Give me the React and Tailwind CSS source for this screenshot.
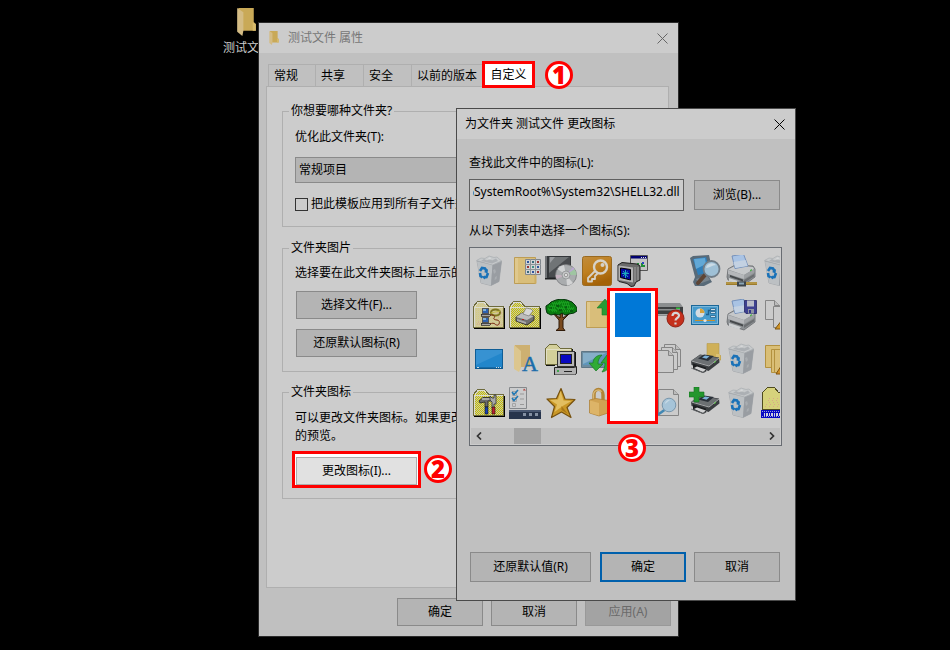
import React, { useEffect, useRef, useState } from "react";

const tabs = [
  { label: "常规", width: "w-[47px]" },
  { label: "共享", width: "w-[48px]" },
  { label: "安全", width: "w-[48px]" },
  { label: "以前的版本", width: "w-[71px]" },
];

function Svg({ children }) {
  return (
    <svg viewBox="0 0 32 32" className="w-8 h-8 shrink-0" aria-hidden="true">
      {children}
    </svg>
  );
}

/* ---------- shared icon pieces ---------- */

function YellowFolder({ x = 5 }) {
  return (
    <g transform={`translate(${x} 0)`}>
      <path d="M.5 2.500h21v26H.5z" fill="#d9be7a" stroke="#bd9d55" strokeWidth="1" />
      <path d="M1 3h3v25H1z" fill="#dfc88d" />
      <path d="M20.500 14l2 3v11.500h-2z" fill="#cdae63" />
    </g>
  );
}

function ClassicFolder({ dense }) {
  const id = dense ? "dither-dense" : "dither-light";
  return (
    <g shapeRendering="crispEdges">
      <defs>
        <pattern id={id} width="2" height="2" patternUnits="userSpaceOnUse">
          <rect width="2" height="2" fill={dense ? "#c9c9a8" : "#d3cf95"} />
          <rect width="1" height="1" fill={dense ? "#c6be00" : "#cfc6a0"} />
          <rect x="1" y="1" width="1" height="1" fill={dense ? "#c6be00" : "#d2c58c"} />
        </pattern>
      </defs>
      <path d="M1 29.500h31M31.500 9v21" stroke="#000" fill="none" />
      <path d="M.5 28.500V7.500l4-5h7l4 4.500h15v21.500z" fill={`url(#${id})`} stroke="#6e6b3c" />
      <path d="M1.500 28V8.500H30M2 7.500L5 3.500h6l3.500 4" fill="none" stroke="#dcdcd0" />
    </g>
  );
}

function PrinterBase() {
  return (
    <g>
      <path d="M3 15l7-4 18 1 2 3v8l-11 8-16-5-1-3z" fill="#8c9093" stroke="#686b6e" strokeWidth=".8" />
      <path d="M3 15.500l8-4 17 1.500 1 2-10 6z" fill="#c6c8ca" />
      <path d="M3 16l16 5v4L3 20z" fill="#b5b7ba" />
      <path d="M19 21l10.500-6v3.500L19 25z" fill="#9da0a3" />
      <path d="M5 21l13 4.500v2L5 23z" fill="#46494c" />
      <path d="M19 26l10-6v2.500L19 29z" fill="#6c6f72" />
      <path d="M4 24l12 4-2 2.500-10-3.500z" fill="#cdd0d2" />
      <path d="M7 2l11.500-2 4.500 12-13 2.500z" fill="#a9c3e4" stroke="#6484b4" strokeWidth=".8" />
      <path d="M8.500 8l12-2 2.200 6-12.500 2z" fill="#c3d1e2" />
      <path d="M25 16l2-1v1.500l-2 1z" fill="#4fb04b" />
    </g>
  );
}

function DarkPrinter() {
  return (
    <g>
      <path d="M2 18l9-6.500 19 3 .500 5-11 8.500L2.500 22z" fill="#3a3d40" />
      <path d="M2.500 17.500L11 12l18.500 3-9.500 7.500z" fill="#6c7073" />
      <path d="M9 15.500l6-4 10 1.500-6 5z" fill="#2a3038" />
      <path d="M13 14.500l3-2 4.500.8-3 2.400z" fill="#7fb2d9" />
      <path d="M2.500 18l17.500 5 10-8" fill="none" stroke="#b4b6b8" strokeWidth=".9" />
      <path d="M4 20.500l13 4v4l-3 1.500L4 26z" fill="#1d1f21" />
      <path d="M5 25l3-1.500 9 3-3 2.500z" fill="#d2d3d4" />
      <path d="M2 25l12 4.500 4-2" fill="none" stroke="#707376" strokeWidth=".8" />
      <path d="M25 19l2-1.500v1.200L25 20.300z" fill="#5ec04c" />
    </g>
  );
}

function BlankPage({ x, y, w = 18, h = 22 }) {
  return (
    <g transform={`translate(${x} ${y})`} fill="#cbcbcb" stroke="#858585" strokeWidth="1">
      <path d={`M0 0H${w - 5}L${w} 5V${h}H0z`} />
      <path d={`M${w - 5} 0V5H${w}`} fill="#bcbcbc" />
    </g>
  );
}

/* ---------- icons of the list ---------- */

function RecycleBin() {
  return (
    <Svg>
      <path d="M4 6l4 22 10 2.500 8-4L28.500 6 19 9z" fill="#a9adb1" stroke="#94999e" strokeWidth=".6" />
      <path d="M4 6.500l4 21.500 10 2.500L19.500 10z" fill="#bcc0c3" />
      <path d="M19.500 10L18 30.500l8-4L28.500 7z" fill="#999da2" />
      <path d="M3.500 5.500L8 3l4 .5 4-2.500 5 1.500 3-.5 4.500 4-9 4z" fill="#c6c9cb" stroke="#a3a7ab" strokeWidth=".6" />
      <path d="M8 6l3-2 3 1.500L17 3l2 2.500 4-2 2 2.500-6 2.500z" fill="#acb0b4" />
      <path d="M14 4.500L17 2l1.500 2.500z" fill="#d5d7d8" />
      <path d="M20 15l2-1 1 3-2 2zM22 22l2-1-.5 3-2 1z" fill="#a9adb1" />
      <g fill="none" stroke="#1a72b8" strokeWidth="2.600">
        <path d="M7 16l2-3 3 .5 1.500 2.500" />
        <path d="M15 18l-1.500 4-3 .5" />
        <path d="M9.500 22.500L7.500 21l-.5-3" />
      </g>
      <path d="M15 14l-.5 4.500L11 17zM12 20.500v4l-3-2.500z" fill="#1a72b8" />
    </Svg>
  );
}

function ProgramsFolder() {
  return (
    <Svg>
      <YellowFolder x={5} />
      <path d="M16.500 4.500h15v15h-15z" fill="#d2d4d6" stroke="#80868c" />
      <path d="M16 9.500h16M16 14.500h16M21.500 4v16M26.500 4v16" stroke="#8e9398" />
      <path d="M18 6h2v2h-2zM28 11h2v2h-2zM23 16h2v2h-2z" fill="#31559c" />
      <path d="M23 6h2v2h-2zM18 16h2v2h-2z" fill="#3b6a7a" />
      <path d="M28 6h2v2h-2zM18 11h2v2h-2zM28 16h2v2h-2z" fill="#9c3331" />
      <path d="M23 11h2v2h-2z" fill="#3d8f85" />
    </Svg>
  );
}

function DiscCase() {
  return (
    <Svg>
      <path d="M0 1h26v22H0z" fill="#34373a" />
      <path d="M0 1h2v22H0z" fill="#707376" />
      <path d="M4 2h21v20H4z" fill="#484b4e" />
      <path d="M4 2h20L4 18z" fill="#707476" />
      <path d="M5 2h5L5 8z" fill="#9a9da0" />
      <path d="M0 23h26v1.500H0z" fill="#1e2022" />
      <circle cx="21" cy="20" r="10.500" fill="#a9acae" stroke="#77797b" strokeWidth=".8" />
      <path d="M21 20L12.500 14A10.500 10.500 0 0 1 19 10z" fill="#cfd1d2" />
      <path d="M21 20l7 8a10 10 0 0 1-6 2.500z" fill="#d3d4d5" />
      <path d="M21 20l8.500-6a10 10 0 0 1 2 6z" fill="#9fc5a2" />
      <path d="M21 20l7-8a10 10 0 0 1 1.500 2z" fill="#b9a8d0" />
      <path d="M21 20l-9.500 4a10 10 0 0 1-.800-4z" fill="#c4b2bf" />
      <circle cx="21" cy="20" r="4" fill="#c5c7c8" stroke="#8d9092" strokeWidth=".8" />
      <circle cx="21" cy="20" r="1.700" fill="#ddd" stroke="#777" strokeWidth=".6" />
    </Svg>
  );
}

function KeyTile() {
  return (
    <Svg>
      <defs>
        <linearGradient id="key-tile" x1="0" y1="0" x2=".4" y2="1">
          <stop offset="0" stopColor="#c18c3c" />
          <stop offset=".5" stopColor="#bf8020" />
          <stop offset="1" stopColor="#a46208" />
        </linearGradient>
      </defs>
      <rect x="1.500" y="1.500" width="29" height="29" rx="2" fill="url(#key-tile)" stroke="#9a6a20" />
      <g fill="none" stroke="#d6d2c8" strokeWidth="2.400" strokeLinejoin="round">
        <circle cx="19.500" cy="12" r="6.500" />
        <path d="M14.500 15.500L7 23v3.500h4V24h3v-3l3.500-3.500" strokeWidth="1.800" />
      </g>
      <circle cx="21.500" cy="10" r="2" fill="#d6d2c8" />
    </Svg>
  );
}

function ScreenWindow() {
  return (
    <Svg>
      <path d="M13.500.500h17v15h-17z" fill="#c4c4c4" stroke="#555" />
      <path d="M14 1h16v2.500H14z" fill="#000070" />
      <path d="M24 2h1v1h-1zM26 2h1v1h-1zM28 2h1v1h-1z" fill="#ddd" />
      <path d="M18 12v-2h2V8h2v4zM24 12V8h2v2h2v2z" fill="#218e38" />
      <path d="M19 10h2v2h-2z" fill="#be2726" />
      <path d="M25 7h2v2h-2z" fill="#2b43c4" />
      <path d="M1 10l4-2.500L20 9l3 2v14l-4 2-2 4-3 .5-4-3-8-2-1-1z" fill="#6b6b6b" stroke="#222" />
      <path d="M1.500 10.500L16 12.500v15L1.500 25z" fill="#b4b4b4" />
      <path d="M3.500 13l10 1.500V25L3.500 22.500z" fill="#06069c" stroke="#000" />
      <path d="M6 16l5 6M11 16.500L6 21M5 18.500h7M8.500 15v8" stroke="#1aa9bd" strokeWidth="1" />
      <path d="M18 12v15M21 12v13" stroke="#a0a0a0" />
    </Svg>
  );
}

function ScreenMagnifier() {
  return (
    <Svg>
      <defs>
        <filter id="soft"><feGaussianBlur stdDeviation=".7" /></filter>
      </defs>
      <g filter="url(#soft)">
        <path d="M1 3l3-2 16-1 4 18-4 4 3 5-8 4H6l-2-4 2-5z" fill="#586a78" />
        <path d="M4 4l13-2 4 15-12 3z" fill="#2f7fbb" />
        <path d="M5 4l11-1 1 6-10 5z" fill="#62a8d6" />
        <path d="M7 24l11-3 3 4-11 4z" fill="#78848d" />
        <path d="M16 20l-7 8" stroke="#5d4434" strokeWidth="4" strokeLinecap="round" />
        <circle cx="22.500" cy="14" r="8" fill="#9fc0d6" stroke="#707d88" strokeWidth="1.800" />
        <path d="M17 13a6 6 0 0 1 10-3c-4 0-6 3-10 3z" fill="#cbdbe6" />
      </g>
    </Svg>
  );
}

function NetworkPrinter() {
  return (
    <Svg>
      <g transform="translate(0 -1)"><PrinterBase /></g>
      <path d="M1 28.500h31" stroke="#9c7c2d" strokeWidth="3" />
      <path d="M1 28h31" stroke="#c9ac5c" strokeWidth="1" />
      <path d="M12 26.500h9v5h-9z" fill="#3c444b" />
      <path d="M14 27.500h5v2h-5z" fill="#8aa6b8" />
    </Svg>
  );
}

function NetworkFolder() {
  return (
    <Svg>
      <ClassicFolder />
      <path d="M4 25h10M5 23h5M24 14h5M25 18h4M22 26h7" stroke="#d2a08c" strokeDasharray="1 1" />
      <g shapeRendering="crispEdges">
        <path d="M9.500 9.500h6v5h-6zM9.500 18.500h6v5h-6z" fill="#2d62b0" stroke="#555" />
        <path d="M8 15h9v2H8zM8 24h9v2H8z" fill="#a5a5a5" stroke="#222" strokeWidth=".7" />
        <path d="M10 10h3v2h-3zM10 19h3v2h-3z" fill="#7fb2d9" />
      </g>
      <ellipse cx="22.500" cy="13.500" rx="4.500" ry="3" fill="none" stroke="#7d7520" strokeWidth="2" />
      <path d="M18 14l9-2" stroke="#c6be4e" />
      <path d="M17 16h2c3 0 3 2 2 3s1 2 3 2 3 2 2 4-3 1-4 0-3-1-5 0" fill="none" stroke="#7a2a12" strokeWidth="1" />
    </Svg>
  );
}

function PrinterFolder() {
  return (
    <Svg>
      <ClassicFolder dense />
      <path d="M7 18l6-4 12 3v4l-7 5-11-4z" fill="#707070" stroke="#333" />
      <path d="M7 18l6-4 12 3-7 4z" fill="#bcbcbc" />
      <path d="M14 15l3-6 5 1 2 2-4 5z" fill="#d6d6d6" stroke="#777" strokeWidth=".7" />
      <path d="M8 20l9 3v2l-9-3z" fill="#aaa" />
      <path d="M13 20h2v1h-2z" fill="#b51e1e" />
    </Svg>
  );
}

function Tree() {
  return (
    <Svg>
      <path d="M7 13l7 8v8l-3 2.500h9L18 29v-8l8-8-8 6-1-6h-2v6z" fill="#7a4a1e" stroke="#2f1a09" />
      <path d="M1 10V7l3-2 2-2 5-2 5-1 6 1 5 2 3 3 2 3v3l-3 2-5 1-4 1-3-2-3 2-4-1-4 1-4-2z" fill="#0a7c10" stroke="#04320b" />
      <g stroke="#25bd2c" strokeDasharray="1 1">
        <path d="M4 7h8M7 4h7M14 3h9M17 6h8M3 10h7M12 9h7M22 9h7M7 12h6M18 12h7" strokeWidth="1" />
        <path d="M5 8h8M8 5h7M15 4h9M18 7h8M4 11h7M13 10h7M23 10h6" />
      </g>
      <path d="M11 7h3M14 11h3M20 8h2M25 12h3M5 9h2" stroke="#033f0a" />
    </Svg>
  );
}

function FolderUp() {
  return (
    <Svg>
      <YellowFolder x={5} />
      <path d="M24 0l8 9h-5v7h-6V9h-5z" fill="#2a9b36" stroke="#1d7a28" strokeWidth=".6" />
    </Svg>
  );
}

function UnknownDrive() {
  return (
    <Svg>
      <path d="M1 8l3-4h23l3 4v8l-3 1H1z" fill="#8b8e8f" />
      <path d="M1 8h29v7H1z" fill="#3d4041" />
      <path d="M2 10h25v1.500H2z" fill="#8a8d8e" />
      <path d="M1 15.500h29" stroke="#a5a7a7" />
      <path d="M23 8.500h4V10h-4z" fill="#2ebc3a" />
      <circle cx="22.500" cy="19.500" r="8.500" fill="#c5301c" stroke="#8e2115" />
      <path d="M19.500 17c0-4 6.500-4 6.500-.5 0 2.500-3.500 2.500-3.500 5M22.500 23.500v2" fill="none" stroke="#d6d6d6" strokeWidth="2.200" />
    </Svg>
  );
}

function ControlPanel() {
  return (
    <Svg>
      <rect x="2.500" y="6.500" width="27" height="19" fill="#469bcd" stroke="#1b6798" />
      <path d="M3.500 7.500h25v17h-25z" fill="none" stroke="#7cb7da" />
      <circle cx="11" cy="14" r="4.500" fill="#d5dbe0" />
      <path d="M11 14V9.500a4.500 4.500 0 0 1 4.500 4.500z" fill="#d6a13a" />
      <path d="M17 15.500h2.500v-4H22" fill="none" stroke="#1f5f8c" strokeWidth="1.400" />
      <path d="M21.500 9.500h5v2h-5zM21.500 12.500h5v2h-5zM21.500 16.500h5v2h-5z" fill="#cfdde8" stroke="#20648f" strokeWidth=".8" />
      <path d="M6 21.500h20" stroke="#c98f2a" strokeWidth="1" />
      <circle cx="16" cy="21.500" r="1.600" fill="#e4e4e4" />
    </Svg>
  );
}

function SavePrinter() {
  return (
    <Svg>
      <PrinterBase />
      <path d="M19.500 1.500h12v13H21l-1.500-1.500z" fill="#3d4090" stroke="#252765" strokeWidth=".8" />
      <path d="M22 1.500h7v6h-7z" fill="#b9bcc8" />
      <path d="M23 10h6v4.500h-6z" fill="#8f94a3" />
      <path d="M24 11h2v3h-2z" fill="#34368b" />
    </Svg>
  );
}

function WarnPages() {
  return (
    <Svg>
      <BlankPage x={4.5} y={1.5} w={14} h={19} />
      <BlankPage x={12.5} y={7.5} w={14} h={21} />
      <path d="M21 21l7 9H14z" fill="#cf9428" stroke="#7a5512" />
    </Svg>
  );
}

function DesktopTile() {
  return (
    <Svg>
      <rect x="2.500" y="6.500" width="27" height="19" fill="#2286cb" stroke="#0f5d95" />
      <path d="M3 7h26v3L3 22z" fill="#3792d2" />
      <path d="M3 25h26" stroke="#0d5284" strokeWidth="1" />
      <path d="M4 24.500h2M23 24.500h1M25 24.500h1M27 24.500h1" stroke="#ccd9e1" />
    </Svg>
  );
}

function FontFolder() {
  return (
    <Svg>
      <path d="M6 2h15v22H6z" fill="#cdb071" />
      <path d="M5 2l7 6v17l-2 4-5-3z" fill="#dcc68e" />
      <text x="21" y="28" textAnchor="middle" fontFamily="Liberation Serif, serif" fontSize="22" fill="#1b6cab" stroke="#1b6cab" strokeWidth=".5">A</text>
    </Svg>
  );
}

function ComputerFolder() {
  return (
    <Svg>
      <g shapeRendering="crispEdges">
        <path d="M.5 21.500V5.500l4-4h7l4 4h11v16z" fill="#d3cf9a" stroke="#6e6b3c" />
        <path d="M1.500 21V6.500H26" fill="none" stroke="#e2dfc4" />
        <path d="M27.500 6v4M1 22.500h9" stroke="#111" />
        <path d="M12.500 8.500h17v15h-17z" fill="#b8b8b8" stroke="#333" />
        <path d="M30.500 9v15" stroke="#111" />
        <path d="M15.500 11.500h11v9h-11z" fill="#0808c0" stroke="#222" />
      </g>
      <path d="M9.500 24.500h20l2-1v7l-2 1.500h-20z" fill="#b2b2b2" stroke="#222" />
      <path d="M12 28h2" stroke="#1b9f2d" strokeWidth="1.500" />
      <path d="M19 28.500h8" stroke="#222" />
    </Svg>
  );
}

function SyncMonitor() {
  return (
    <Svg>
      <path d="M.5 8.500h26v16H.5z" fill="#6c8ca0" stroke="#5e7685" />
      <path d="M2 10h23v12H2z" fill="#5e95bb" />
      <path d="M2 10h23L2 21z" fill="#86afc9" />
      <g fill="#2faa35" stroke="#177a22" strokeWidth=".7">
        <path d="M21 12c-6 0-9 4-9 8H8l7 8 7-7h-5c0-4 1-6 4-9z" />
        <path d="M21 29c5-1 8-4 8-10h3l-6-7-6 8h4c0 4-1 6-3 9z" />
      </g>
    </Svg>
  );
}

function PageStack() {
  return (
    <Svg>
      <BlankPage x={11.5} y={1.5} w={16} h={22} />
      <BlankPage x={8.5} y={4.5} w={16} h={22} />
      <BlankPage x={4.5} y={7.5} w={16} h={22} />
    </Svg>
  );
}

function FolderPrinter() {
  return (
    <Svg>
      <path d="M18 .5h12V11l2 2v4H18z" fill="#cfb058" stroke="#b69a4c" strokeWidth=".6" />
      <path d="M27 11h4v6h-4z" fill="#dcc071" />
      <DarkPrinter />
    </Svg>
  );
}

function WarnFolders() {
  return (
    <Svg>
      <path d="M4.500 2.500h15v22h-15z" fill="#d9be76" stroke="#b3913f" />
      <path d="M10.500 6.500h15v23h-15z" fill="#d9be76" stroke="#b3913f" />
      <path d="M13.500 6.500v23" stroke="#b3913f" />
      <path d="M22 20l8 11H15z" fill="#d08f28" stroke="#80530d" />
    </Svg>
  );
}

function ToolsFolder() {
  return (
    <Svg>
      <ClassicFolder dense />
      <path d="M6 14l4-3.500h9V14h-4v6h-3v-5l-5 1z" fill="#6b6b6b" stroke="#222" strokeWidth=".8" />
      <path d="M9 12h8" stroke="#d2d2d2" strokeWidth="1.200" />
      <path d="M17 9l2 2h2V8h2v9h-2v4h-2v-6l-2-2z" fill="#a8a8a8" stroke="#333" strokeWidth=".8" />
      <path d="M12 20h3v7h-3z" fill="#1640b5" stroke="#111" strokeWidth=".6" />
      <path d="M19 20h3v7h-3z" fill="#bc2030" stroke="#111" strokeWidth=".6" />
    </Svg>
  );
}

function Checklist() {
  return (
    <Svg>
      <path d="M.5.500h17v21H.5z" fill="#cbcccd" stroke="#85888b" />
      <path d="M3.500 4.500h4v4h-4zM3.500 10.500h4v4h-4zM3.500 16.500h3v3h-3z" fill="none" stroke="#a5a5a5" />
      <path d="M3 5l2 2.500L9 3M3 11l2 2.500L9 9" fill="none" stroke="#1f78b5" strokeWidth="1.600" />
      <path d="M11 7h4M11 12h4M11 17.500h4" stroke="#999" />
      <path d="M15 1.500l2 2h-3z" fill="#b2403a" />
      <path d="M0 23h32v9H0z" fill="#27344c" />
      <path d="M0 23h32v2H0z" fill="#4a5872" />
      <path d="M14 26h3v3h-3zM20 26h3v3h-3zM26 26h3v3h-3z" fill="#8490a3" />
    </Svg>
  );
}

function Star() {
  return (
    <Svg>
      <path d="M16 1.500l4 10.500 10 .5-8 8 4 10-9.500-5.500-10 5.500 3-11L2 12l9.500-.5z" fill="#c99726" stroke="#76510f" strokeWidth="1.200" strokeLinejoin="round" />
      <path d="M15.500 4l3 9.500 8 .500-8 4.500-9 6.500 2.500-7.500L5 13l8-.5z" fill="#e2be60" />
      <path d="M16.500 19l6.500 8-6.500-4z" fill="#a87718" />
    </Svg>
  );
}

function Padlock() {
  return (
    <Svg>
      <path d="M13 14V8c0-7.500 9-7.500 9 0v7" fill="none" stroke="#b08436" strokeWidth="3.400" />
      <path d="M12.500 14V8c0-5 6-6.500 8-3" fill="none" stroke="#d7b674" strokeWidth="1.400" />
      <path d="M8.500 13L15 11.500l12 2V26l-9 3-9.500-3z" fill="#d0a252" stroke="#aa7c30" strokeWidth=".7" />
      <path d="M9 13.500l9 2.500v12.500L9 26z" fill="#ddb468" />
    </Svg>
  );
}

function SearchPage() {
  return (
    <Svg>
      <BlankPage x={5.5} y={2.5} w={20} h={26} />
      <path d="M11.500 23L3 29" stroke="#4288b3" strokeWidth="2.600" />
      <circle cx="16" cy="18" r="6.800" fill="#a6c4d8" stroke="#7896ac" strokeWidth="1" />
      <path d="M12 17c0-3 3-5 6-4-2 0-3 2-6 4z" fill="#c6d9e5" />
    </Svg>
  );
}

function AddPrinter() {
  return (
    <Svg>
      <g transform="translate(0 -3)"><DarkPrinter /></g>
      <path d="M5 0h5v5h5v5h-5v5H5v-5H0V5h5z" fill="#23962e" stroke="#16731f" strokeWidth=".6" />
    </Svg>
  );
}

function StripFolder() {
  return (
    <Svg>
      <g shapeRendering="crispEdges">
        <path d="M1.500 22.500V5.500l5-5h7l4 5h12v17z" fill="#d6d27c" stroke="#4f4c20" />
        <path d="M8 11h20M7 13h20M8 15h20M5 17h20M4 19h20" stroke="#d9a888" strokeDasharray="1 3" />
        <path d="M0 23h32v8H0z" fill="#0808c4" />
        <path d="M1 24.500h30M1 29.500h30" stroke="#9aa0d8" strokeDasharray="1 1" />
        <path d="M3 27h28" stroke="#d0d0e0" strokeWidth="3" strokeDasharray="1 1 2 1" />
      </g>
    </Svg>
  );
}

// Row by row, null leaves the cell empty
const icons = [
  RecycleBin, ProgramsFolder, DiscCase, KeyTile, ScreenWindow, null, ScreenMagnifier, NetworkPrinter, RecycleBin,
  NetworkFolder, PrinterFolder, Tree, FolderUp, null, UnknownDrive, ControlPanel, SavePrinter, WarnPages,
  DesktopTile, FontFolder, ComputerFolder, SyncMonitor, null, PageStack, FolderPrinter, RecycleBin, WarnFolders,
  ToolsFolder, Checklist, Star, Padlock, null, SearchPage, AddPrinter, RecycleBin, StripFolder,
];

function FolderShape({ className }) {
  return (
    <svg viewBox="0 0 18 27" className={className} aria-hidden="true">
      <path d="M1 0h15v13.500l2 2V22H5z" fill="#c9a957" />
      <path d="M15 14l3 1.500V22h-3z" fill="#d7ba6c" />
      <path d="M0 0l6 4v18l-1 5-5-4z" fill="#d4bc85" />
    </svg>
  );
}

function CloseButton({ className }) {
  return (
    <button aria-label="关闭" className={`w-[31px] h-[30px] flex items-center justify-center ${className}`}>
      <svg viewBox="0 0 11 11" className="w-[11px] h-[11px]" fill="none" stroke="currentColor">
        <path d="M.5.500l10 10M10.500.500l-10 10" />
      </svg>
    </button>
  );
}

function Button({ children, className = "", disabled = false }) {
  return (
    <button
      disabled={disabled}
      className={`border border-[#8a8a8a] bg-[#b4b4b4] disabled:border-[#999] disabled:bg-[#a3a3a3] disabled:text-[#6a6a6a] whitespace-nowrap ${className}`}
    >
      {children}
    </button>
  );
}

function Group({ title, className, children }) {
  return (
    <fieldset className={`border border-[#afafaf] pl-3 pr-3 min-w-0 ${className}`}>
      <legend className="-ml-[6px] px-[2px]">{title}</legend>
      {children}
    </fieldset>
  );
}

function StepBadge({ number, className }) {
  return (
    <div className={`absolute w-7 h-7 rounded-full border-3 border-[#f00] bg-white text-[#f00] text-[24px] leading-none font-extrabold flex items-center justify-center font-['Open_Sans',sans-serif] ${className}`}>
      {number}
    </div>
  );
}

function PropertiesWindow() {
  return (
    <section className="absolute left-[258px] top-[22px] w-[421px] border border-[#2b2b2b] bg-[#c0c0c0]">
      <header className="h-[30px] bg-[#ccc] flex items-center pl-[10px] text-[#777]">
        <FolderShape className="w-[10px] h-[14px]" />
        <h1 className="ml-[9px] flex-1">测试文件 属性</h1>
        <CloseButton className="text-[#666]" />
      </header>

      <div className="px-[7px] pt-2 pb-[10px]">
        <div className="flex items-end pl-[2px]">
          {tabs.map((tab) => (
            <button key={tab.label} className={`${tab.width} h-[22px] border-t border-l border-[#afafaf] pl-[5px] text-left whitespace-nowrap`}>
              {tab.label}
            </button>
          ))}
          <button className="relative w-[53px] h-[27px] -mb-[2px] border-3 border-[#f00] bg-white whitespace-nowrap">自定义</button>
        </div>

        <div className="mr-[2px] border border-[#afafaf] bg-[#ccc] px-[15px] pt-[15px] pb-[88px]">
          <Group title="你想要哪种文件夹?" className="pt-2 pb-[13px]">
            <label htmlFor="template" className="block">优化此文件夹(T):</label>
            <select id="template" className="appearance-none block mt-[11px] w-full h-[26px] border border-[#8a8a8a] bg-[#b4b4b4] pl-[3px]">
              <option>常规项目</option>
            </select>
            <label className="mt-3 flex items-center gap-[3px] whitespace-nowrap">
              <input type="checkbox" className="appearance-none w-[13px] h-[13px] border border-[#333] bg-[#ccc]" />
              把此模板应用到所有子文件夹(U)
            </label>
          </Group>

          <Group title="文件夹图片" className="mt-3 pt-[7px] pb-[14px]">
            <p>选择要在此文件夹图标上显示的文件。</p>
            <Button className="block w-[121px] h-7 ml-px mt-[9px]">选择文件(F)...</Button>
            <Button className="block w-[121px] h-7 ml-px mt-[10px]">还原默认图标(R)</Button>
          </Group>

          <Group title="文件夹图标" className="mt-[11px] pt-2 pb-[10px]">
            <p>
              可以更改文件夹图标。如果更改图标,则不会再显示此文件夹
              <br />
              的预览。
            </p>
            <div className="mt-[6px] -ml-[3px] w-[129px] border-3 border-[#f00] bg-white px-px pt-[3px]">
              <button className="block w-full h-7 border border-[#adadad] bg-[#e1e1e1]">更改图标(I)...</button>
            </div>
          </Group>
        </div>

        <footer className="mt-[10px] flex justify-end gap-2">
          <Button className="w-[86px] h-7">确定</Button>
          <Button className="w-[86px] h-7">取消</Button>
          <Button className="w-[86px] h-7" disabled>应用(A)</Button>
        </footer>
      </div>
    </section>
  );
}

function ChangeIconWindow() {
  const pathRef = useRef(null);
  const [path, setPath] = useState("%SystemRoot%\\System32\\SHELL32.dll");
  const [selected, setSelected] = useState(13);

  // keep the file name at the end of the path in view
  useEffect(() => {
    pathRef.current.scrollLeft = pathRef.current.scrollWidth;
  }, []);

  return (
    <section className="absolute left-[456px] top-[108px] w-[340px] border border-[#4a4a4a] bg-[#c0c0c0]">
      <header className="h-[30px] bg-[#ccc] flex items-center pl-2">
        <h2 className="flex-1">为文件夹 测试文件 更改图标</h2>
        <CloseButton />
      </header>

      <div className="px-3 pt-[15px] pb-[18px]">
        <label htmlFor="path" className="block">查找此文件中的图标(L):</label>
        <div className="mt-[7px] flex items-center pr-[3px]">
          <input
            id="path"
            ref={pathRef}
            value={path}
            onChange={(e) => setPath(e.target.value)}
            className="flex-1 min-w-0 h-8 border border-[#606060] bg-[#ccc] px-[3px] pb-2 text-[12px]"
          />
          <Button className="ml-[10px] w-[86px] h-[30px]">浏览(B)...</Button>
        </div>

        <div className="mt-[11px]">从以下列表中选择一个图标(S):</div>
        <div className="mt-[7px] mr-px border border-[#686c72] bg-[#ccc] p-px">
          <div className="relative">
            <div className="grid grid-cols-[repeat(9,36px)] overflow-hidden">
              {icons.map((Icon, i) => (
                <button
                  key={i}
                  aria-label={`图标 ${i + 1}`}
                  onClick={() => setSelected(i)}
                  className={`h-11 flex items-center justify-center ${selected === i ? "relative z-10 bg-[#0078d7]" : ""}`}
                >
                  {Icon && <Icon />}
                </button>
              ))}
            </div>
            <div className="absolute left-[136px] top-[39px] w-[51px] h-[136px] border-3 border-[#f00] bg-white pointer-events-none"></div>
          </div>
          <div className="mt-[3px] h-4 bg-[#c0c0c0] flex items-center text-[#333]">
            <button aria-label="向左" className="w-4 flex justify-center">
              <svg viewBox="0 0 6 8" className="w-[6px] h-2" fill="none" stroke="currentColor" strokeWidth="1.700"><path d="M5 .5L1.500 4 5 7.500" /></svg>
            </button>
            <div className="ml-[27px] w-[27px] h-full bg-[#a4a4a4]"></div>
            <button aria-label="向右" className="w-4 ml-auto flex justify-center">
              <svg viewBox="0 0 6 8" className="w-[6px] h-2" fill="none" stroke="currentColor" strokeWidth="1.700"><path d="M1 .5L4.500 4 1 7.500" /></svg>
            </button>
          </div>
        </div>

        <footer className="mt-[106px] flex gap-2 pl-px">
          <Button className="w-[121px] h-[30px]">还原默认值(R)</Button>
          <button className="ml-px w-[86px] h-[30px] border-2 border-[#0060ac] bg-[#b4b4b4]">确定</button>
          <Button className="w-[86px] h-[30px]">取消</Button>
        </footer>
      </div>
    </section>
  );
}

export default function App() {
  return (
    <main className="relative min-h-screen overflow-hidden bg-black text-black text-[12px] leading-[18px] font-['Noto_Sans','Noto_Sans_CJK_SC',sans-serif]">
      <div className="absolute left-[223px] top-2 w-12 flex flex-col items-center text-[#ccc]">
        <FolderShape className="w-[19px] h-7 -ml-[2px]" />
        <span className="mt-[3px] whitespace-nowrap">测试文件</span>
      </div>
      <PropertiesWindow />
      <ChangeIconWindow />
      <StepBadge number={1} className="left-[545px] top-[61px]" />
      <StepBadge number={2} className="left-[424px] top-[455px]" />
      <StepBadge number={3} className="left-[618px] top-[434px]" />
    </main>
  );
}
